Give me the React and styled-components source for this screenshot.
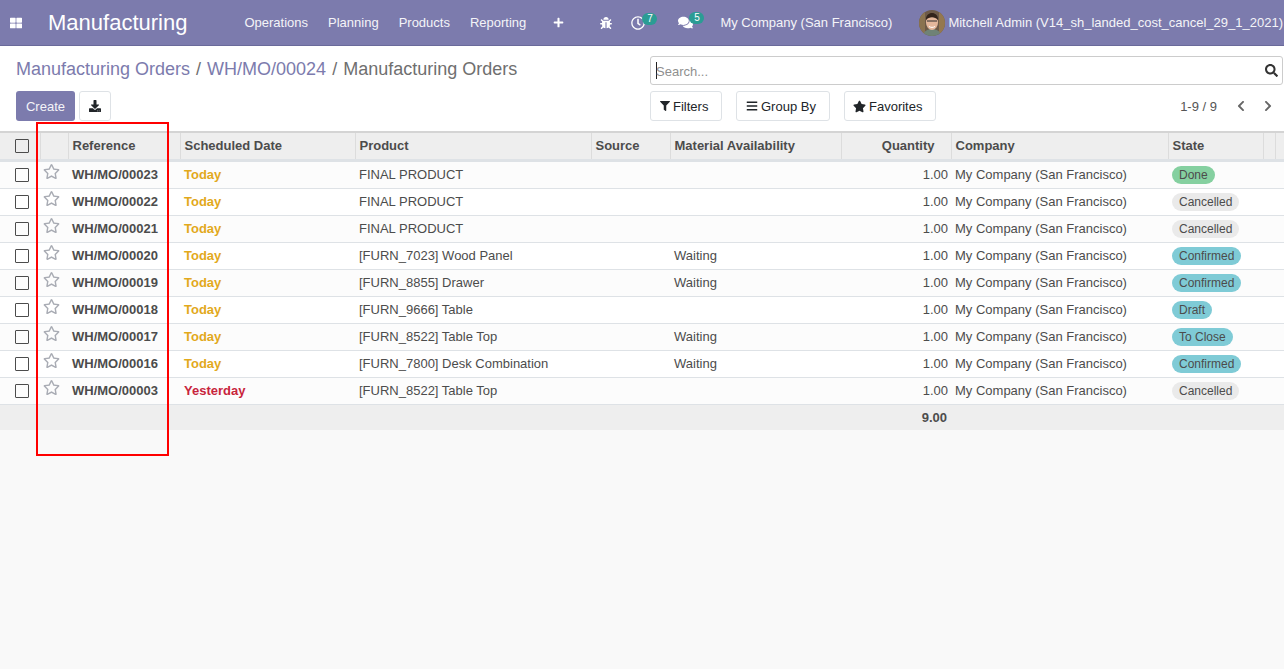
import React from 'react';
import styled, { createGlobalStyle } from 'styled-components';
import {
  FaThLarge, FaBug, FaRegClock, FaComments, FaPlus, FaDownload, FaFilter, FaBars, FaStar,
  FaRegStar, FaSearch, FaChevronLeft, FaChevronRight,
} from 'react-icons/fa';

const GlobalStyle = createGlobalStyle`
  html, body { margin: 0; padding: 0; height: 100%; }
  body {
    background: #f9f9f9;
    color: #4c4c4c;
    font-family: "Liberation Sans", Arial, sans-serif;
    font-size: 13px;
    overflow: hidden;
  }
`;

const Page = styled.div`
  position: relative;
  width: 1284px;
  height: 669px;
  overflow: hidden;
`;

const NavBar = styled.header`
  display: flex;
  align-items: center;
  height: 45px;
  background: #7c7bad;
  border-bottom: 1px solid #6a6a9a;
  color: #fff;
  white-space: nowrap;
`;

const AppsButton = styled.div`
  display: flex;
  width: 32px;
  justify-content: center;
  font-size: 12px;
`;

const Brand = styled.div`
  margin-left: 16px;
  margin-right: 57px;
  font-size: 22px;
`;

const MenuItem = styled.span`
  margin-right: 20px;
  color: #f4f4f8;
`;

const SysTray = styled.div`
  display: flex;
  align-items: center;
  margin-left: auto;
  padding-right: 1px;
`;

const TrayIcon = styled.span`
  position: relative;
  display: flex;
  align-items: center;
  margin-left: ${p => p.$left}px;
  font-size: 14px;
`;

const Badge = styled.span`
  position: absolute;
  top: -3px;
  left: 11px;
  min-width: 7px;
  padding: 0 4px;
  border-radius: 6px;
  background: #2b9c94;
  font-size: 10px;
  line-height: 12px;
  text-align: center;
`;

const Company = styled.span`
  margin-left: 27px;
  margin-right: 27px;
  color: #f4f4f8;
`;

const UserName = styled.span`
  margin-left: 3px;
  color: #f4f4f8;
`;

const ControlPanel = styled.section`
  display: flex;
  justify-content: space-between;
  height: 87px;
  padding: 0 1px 0 16px;
  background: #fff;
  border-bottom: 2px solid #d4d4d4;
  box-sizing: border-box;
`;

const LeftPanel = styled.div`
  display: flex;
  flex-direction: column;
`;

const Breadcrumb = styled.div`
  margin-top: 12px;
  height: 33px;
  font-size: 18px;
  line-height: 22px;
  color: #6f6f6f;
`;

const CrumbLink = styled.span`
  color: #7c7bad;
`;

const Sep = styled.span`
  margin: 0 6px;
`;

const Buttons = styled.div`
  display: flex;
  gap: 4px;
`;

const PrimaryButton = styled.div`
  display: flex;
  align-items: center;
  justify-content: center;
  width: 59px;
  height: 30px;
  border-radius: 3px;
  background: #7c7bad;
  color: #f4f4f8;
`;

const OutlineButton = styled.div`
  display: flex;
  align-items: center;
  justify-content: center;
  width: ${p => p.$width}px;
  height: 30px;
  box-sizing: border-box;
  border: 1px solid #dee2e6;
  border-radius: 3px;
  background: #fff;
  color: #212529;
  font-size: 13px;
`;

const FilterButton = styled(OutlineButton)`
  justify-content: flex-start;
  gap: 3px;
  padding-left: ${p => p.$pad}px;
`;

const RightPanel = styled.div`
  display: flex;
  flex-direction: column;
  width: 633px;
  padding-top: 10px;
`;

const SearchBox = styled.div`
  display: flex;
  align-items: center;
  justify-content: space-between;
  height: 29px;
  box-sizing: border-box;
  margin-bottom: 6px;
  padding: 0 4px 0 5px;
  border: 1px solid #ccc;
  border-radius: 3px;
  color: #8f8f8f;
`;

const SearchText = styled.span`
  padding-top: 2px;
  box-shadow: inset 1px 0 0 #222;
  line-height: 15px;
`;

const SearchIcon = styled.span`
  display: flex;
  font-size: 13px;
  color: #333;
`;

const FilterRow = styled.div`
  display: flex;
  align-items: center;
  gap: 14px;
`;

const Pager = styled.div`
  display: flex;
  align-items: center;
  margin-left: auto;
  padding-right: 9px;
  color: #555;
`;

const PagerArrow = styled.span`
  display: flex;
  margin-left: ${p => p.$left}px;
  font-size: 12px;
  color: #666;
`;

const Table = styled.table`
  width: 1284px;
  table-layout: fixed;
  border-collapse: collapse;
  background: #fff;
`;

const HeadRow = styled.tr`
  height: 27px;
  background: #eee;
  border-bottom: 3px solid #dee2e6;
`;

const Th = styled.th`
  padding: ${p => (p.$right ? '0 16px 0 4px' : '0 4px')};
  border-left: ${p => (p.$noLine ? 'none' : '1px solid #dcdcdc')};
  font-size: 13px;
  font-weight: bold;
  text-align: ${p => (p.$right ? 'right' : 'left')};
  color: #4c4c4c;
`;

const CheckTh = styled(Th)`
  padding: 0;
`;

const Row = styled.tr`
  height: 27px;
  box-sizing: border-box;
  background: ${p => (p.$odd ? '#fff' : '#fcfcfc')};
  border-bottom: 1px solid #dee2e6;
  &:first-child {
    height: 28px;
  }
`;

const Td = styled.td`
  padding: 0 3px 0 4px;
  white-space: nowrap;
  overflow: hidden;
  text-align: ${p => (p.$right ? 'right' : 'left')};
  font-weight: ${p => (p.$bold ? 'bold' : 'normal')};
  color: ${p => p.$color || '#4c4c4c'};
`;

const CheckTd = styled(Td)`
  padding: 0;
`;

const StarTd = styled(Td)`
  padding: 0 0 0 3px;
`;

const TotalRow = styled.tr`
  height: 26px;
  background: #eee;
`;

const Total = styled.td`
  padding: 0 4px;
  font-weight: bold;
  text-align: right;
`;

const CheckBox = styled.span`
  display: block;
  width: 12px;
  height: 12px;
  margin-left: 15px;
  border: 1px solid #4c4c4c;
  border-radius: 1px;
`;

const StarCell = styled.span`
  display: block;
  margin-top: -4px;
  font-size: 17px;
  line-height: 17px;
  color: #a9acb4;
`;

const Status = styled.span`
  display: inline-block;
  padding: 0 7px;
  border-radius: 9px;
  background: ${p => p.$bg};
  font-size: 12px;
  line-height: 18px;
  color: #4c4c4c;
`;

const Annotation = styled.div`
  position: absolute;
  left: 36px;
  top: 122px;
  width: 133px;
  height: 334px;
  box-sizing: border-box;
  border: 2px solid #f00;
  pointer-events: none;
`;

const STATE_COLORS = {
  Done: '#85d0a0',
  Cancelled: '#eaeaea',
  Confirmed: '#7fcbd6',
  Draft: '#7fcbd6',
  'To Close': '#7fcbd6',
};

const rows = [
  ['WH/MO/00023', 'Today', 'FINAL PRODUCT', '', 'Done'],
  ['WH/MO/00022', 'Today', 'FINAL PRODUCT', '', 'Cancelled'],
  ['WH/MO/00021', 'Today', 'FINAL PRODUCT', '', 'Cancelled'],
  ['WH/MO/00020', 'Today', '[FURN_7023] Wood Panel', 'Waiting', 'Confirmed'],
  ['WH/MO/00019', 'Today', '[FURN_8855] Drawer', 'Waiting', 'Confirmed'],
  ['WH/MO/00018', 'Today', '[FURN_9666] Table', '', 'Draft'],
  ['WH/MO/00017', 'Today', '[FURN_8522] Table Top', 'Waiting', 'To Close'],
  ['WH/MO/00016', 'Today', '[FURN_7800] Desk Combination', 'Waiting', 'Confirmed'],
  ['WH/MO/00003', 'Yesterday', '[FURN_8522] Table Top', '', 'Cancelled'],
];

const columnWidths = [40, 28, 112, 175, 236, 79, 171, 110, 217, 95, 12, 9];

const Avatar = () => (
  <svg width="26" height="26" viewBox="0 0 26 26">
    <defs>
      <clipPath id="avatar-clip"><circle cx="13" cy="13" r="13" /></clipPath>
    </defs>
    <g clipPath="url(#avatar-clip)">
      <rect width="26" height="26" fill="#6d5a48" />
      <rect x="0" y="0" width="6" height="26" fill="#8a7350" />
      <rect x="20" y="0" width="6" height="26" fill="#94784f" />
      <path d="M4 26c1-5 4-7 9-7s8 2 9 7z" fill="#6f8276" />
      <ellipse cx="13" cy="12.500" rx="6" ry="7.500" fill="#e3b79b" />
      <path d="M7 10c-.5-4.500 3-7 6-7s6.500 2.500 6 7c-1.500-2-4-2.800-6-2.800S8.500 8 7 10z" fill="#33241b" />
      <path d="M8 11h4M14 11h4M12 11h2" stroke="#2c2c2c" strokeWidth="1" />
      <path d="M10 16.500c2 1.200 4 1.200 6 0" stroke="#fff" strokeWidth="1" fill="none" />
    </g>
  </svg>
);

function App() {
  return (
    <Page>
      <GlobalStyle />
      <NavBar>
        <AppsButton><FaThLarge /></AppsButton>
        <Brand>Manufacturing</Brand>
        <MenuItem>Operations</MenuItem>
        <MenuItem>Planning</MenuItem>
        <MenuItem>Products</MenuItem>
        <MenuItem>Reporting</MenuItem>
        <TrayIcon $left={7}><FaPlus size={11} /></TrayIcon>
        <SysTray>
          <TrayIcon $left={0}><FaBug size={12} /></TrayIcon>
          <TrayIcon $left={19}><FaRegClock /><Badge>7</Badge></TrayIcon>
          <TrayIcon $left={33}><FaComments size={15} /><Badge>5</Badge></TrayIcon>
          <Company>My Company (San Francisco)</Company>
          <Avatar />
          <UserName>Mitchell Admin (V14_sh_landed_cost_cancel_29_1_2021)</UserName>
        </SysTray>
      </NavBar>

      <ControlPanel>
        <LeftPanel>
          <Breadcrumb>
            <CrumbLink>Manufacturing Orders</CrumbLink>
            <Sep>/</Sep>
            <CrumbLink>WH/MO/00024</CrumbLink>
            <Sep>/</Sep>
            Manufacturing Orders
          </Breadcrumb>
          <Buttons>
            <PrimaryButton>Create</PrimaryButton>
            <OutlineButton $width={32}><FaDownload size={12} /></OutlineButton>
          </Buttons>
        </LeftPanel>
        <RightPanel>
          <SearchBox>
            <SearchText>Search...</SearchText>
            <SearchIcon><FaSearch /></SearchIcon>
          </SearchBox>
          <FilterRow>
            <FilterButton $width={72} $pad={9}><FaFilter size={10} />Filters</FilterButton>
            <FilterButton $width={94} $pad={9}><FaBars size={12} />Group By</FilterButton>
            <FilterButton $width={92} $pad={8}><FaStar size={13} />Favorites</FilterButton>
            <Pager>
              1-9 / 9
              <PagerArrow $left={18}><FaChevronLeft /></PagerArrow>
              <PagerArrow $left={15}><FaChevronRight /></PagerArrow>
            </Pager>
          </FilterRow>
        </RightPanel>
      </ControlPanel>

      <Table>
        <colgroup>
          {columnWidths.map((w, i) => <col key={i} width={w} />)}
        </colgroup>
        <thead>
          <HeadRow>
            <CheckTh $noLine><CheckBox /></CheckTh>
            <Th />
            <Th>Reference</Th>
            <Th>Scheduled Date</Th>
            <Th>Product</Th>
            <Th>Source</Th>
            <Th>Material Availability</Th>
            <Th $right>Quantity</Th>
            <Th>Company</Th>
            <Th>State</Th>
            <Th />
            <Th />
          </HeadRow>
        </thead>
        <tbody>
          {rows.map((r, i) => (
            <Row key={r[0]} $odd={i % 2 === 1}>
              <CheckTd><CheckBox /></CheckTd>
              <StarTd><StarCell><FaRegStar /></StarCell></StarTd>
              <Td $bold>{r[0]}</Td>
              <Td $bold $color={r[1] === 'Yesterday' ? '#c8243c' : '#e2a91c'}>{r[1]}</Td>
              <Td>{r[2]}</Td>
              <Td />
              <Td>{r[3]}</Td>
              <Td $right>1.00</Td>
              <Td>My Company (San Francisco)</Td>
              <Td><Status $bg={STATE_COLORS[r[4]]}>{r[4]}</Status></Td>
              <Td />
              <Td />
            </Row>
          ))}
        </tbody>
        <tfoot>
          <TotalRow>
            <td colSpan={7} />
            <Total>9.00</Total>
            <td colSpan={4} />
          </TotalRow>
        </tfoot>
      </Table>

      <Annotation />
    </Page>
  );
}

export default App;
